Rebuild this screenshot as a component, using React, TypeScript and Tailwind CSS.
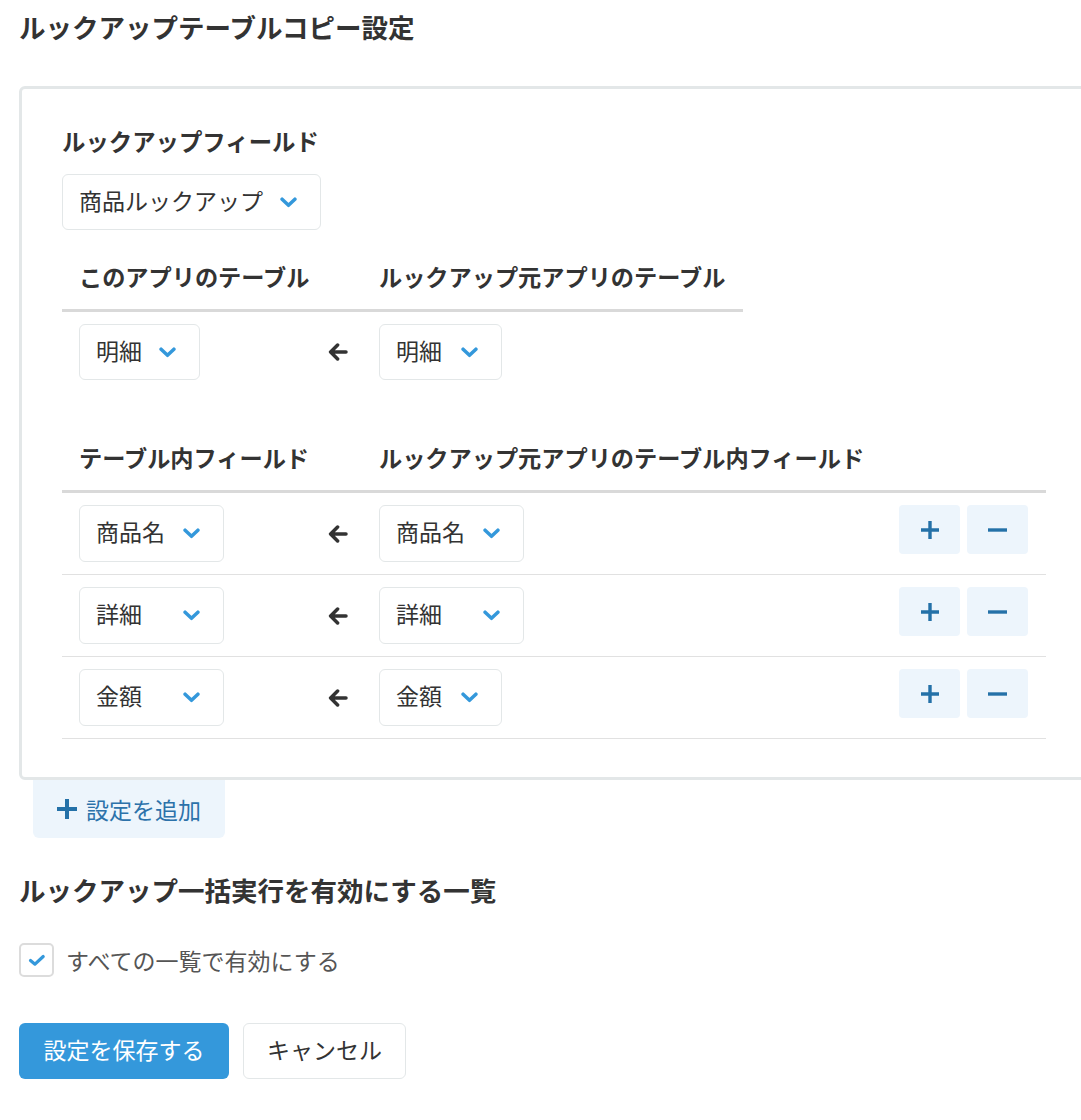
import React from "react";

function Chevron() {
  return (
    <svg width="17" height="11" viewBox="0 0 17 11" fill="none" className="shrink-0">
      <path d="M2.1 2.2 L8.5 8.3 L14.9 2.2" stroke="#3498db" strokeWidth="3.5" strokeLinecap="round" strokeLinejoin="round" />
    </svg>
  );
}

function ArrowLeft() {
  return (
    <svg width="20" height="18" viewBox="0 0 20 18" fill="none">
      <path d="M18 9 H2.8 M9.6 2 L2.6 9 L9.6 16" stroke="#333" strokeWidth="3.5" strokeLinecap="round" strokeLinejoin="round" />
    </svg>
  );
}

function Select({ label, className }: { label: string; className: string }) {
  return (
    <div className={"flex items-center justify-between border border-[#e3e7e8] rounded-[6px] bg-white pl-[16px] pr-[23px] " + className}>
      <span className="text-[23px] leading-[34px] pb-[5px] text-[#333] whitespace-nowrap">{label}</span>
      <Chevron />
    </div>
  );
}

function PlusIcon({ size = 18, stroke = 3.4 }: { size?: number; stroke?: number }) {
  return (
    <svg width={size} height={size} viewBox={`0 0 ${size} ${size}`} fill="none">
      <path d={`M${size / 2} 0 V${size} M0 ${size / 2} H${size}`} stroke="#2471a8" strokeWidth={stroke} />
    </svg>
  );
}

function MinusIcon() {
  return (
    <svg width="19" height="4" viewBox="0 0 19 4" fill="none">
      <path d="M0 2 H19" stroke="#2471a8" strokeWidth="3.4" />
    </svg>
  );
}

const rows = [
  { left: "商品名", right: "商品名", rw: "w-[145px]" },
  { left: "詳細", right: "詳細", rw: "w-[145px]" },
  { left: "金額", right: "金額", rw: "w-[123px]" },
];

export default function App() {
  return (
    <div className="w-[1081px] min-h-[1120px] overflow-hidden bg-white text-[#333] font-['Noto_Sans_CJK_JP','Noto_Sans',sans-serif] pl-[19px]">
      <h1 className="pt-[7px] text-[26.5px] leading-[40px] font-bold whitespace-nowrap">ルックアップテーブルコピー設定</h1>

      <div className="mt-[39px] w-[1100px] border-[3px] border-[#e3e7e8] rounded-[6px] pl-[40px] pt-[35px] pb-[38px]">
        <div className="text-[23.4px] leading-[34px] font-bold whitespace-nowrap">ルックアップフィールド</div>
        <Select label="商品ルックアップ" className="mt-[16px] w-[259px] h-[56px]" />

        {/* table 1 */}
        <div className="mt-[31px] w-[681px]">
          <div className="flex border-b-[3px] border-[#d9d9d9] pb-[18px]">
            <div className="w-[263px] pl-[17px] text-[23.2px] leading-[30px] font-bold whitespace-nowrap">このアプリのテーブル</div>
            <div className="w-[37px]" />
            <div className="flex-1 pl-[17px] text-[23.2px] leading-[30px] font-bold whitespace-nowrap">ルックアップ元アプリのテーブル</div>
          </div>
          <div className="flex items-start py-[12px]">
            <div className="w-[263px] pl-[17px]">
              <Select label="明細" className="w-[121px] h-[56px]" />
            </div>
            <div className="w-[37px] h-[56px] pl-[3px] flex items-center">
              <ArrowLeft />
            </div>
            <div className="flex-1 pl-[17px]">
              <Select label="明細" className="w-[123px] h-[56px]" />
            </div>
          </div>
        </div>

        {/* table 2 */}
        <div className="mt-[50px] w-[984px]">
          <div className="flex border-b-[3px] border-[#d9d9d9] pb-[18px]">
            <div className="w-[263px] pl-[17px] text-[23.2px] leading-[30px] font-bold whitespace-nowrap">テーブル内フィールド</div>
            <div className="w-[37px]" />
            <div className="flex-1 pl-[17px] text-[23.2px] leading-[30px] font-bold whitespace-nowrap">ルックアップ元アプリのテーブル内フィールド</div>
          </div>
          {rows.map((r, i) => (
            <div key={i} className="flex items-start pt-[12px] pb-[12px] border-b border-[#e1e1e1]">
              <div className="w-[263px] pl-[17px]">
                <Select label={r.left} className="w-[145px] h-[57px]" />
              </div>
              <div className="w-[37px] h-[57px] pl-[3px] flex items-center">
                <ArrowLeft />
              </div>
              <div className="flex-1 pl-[17px]">
                <Select label={r.right} className={r.rw + " h-[57px]"} />
              </div>
              <div className="flex gap-[7px] pr-[18px]">
                <button className="w-[61px] h-[49px] rounded-[4px] bg-[#edf5fc] flex items-center justify-center">
                  <PlusIcon />
                </button>
                <button className="w-[61px] h-[49px] rounded-[4px] bg-[#edf5fc] flex items-center justify-center">
                  <MinusIcon />
                </button>
              </div>
            </div>
          ))}
        </div>
      </div>

      <button className="ml-[14px] w-[192px] h-[58px] rounded-b-[6px] bg-[#edf5fc] flex items-center pl-[24px] gap-[9px]">
        <PlusIcon size={20} stroke={4} />
        <span className="text-[23px] leading-[34px] text-[#2c72aa] whitespace-nowrap">設定を追加</span>
      </button>

      <h2 className="mt-[32px] text-[26.5px] leading-[40px] font-bold whitespace-nowrap">ルックアップ一括実行を有効にする一覧</h2>

      <label className="mt-[33px] flex items-center">
        <span className="w-[35px] h-[34px] border-2 border-[#dcdcdc] rounded-[5px] flex items-center justify-center bg-white">
          <svg width="18" height="13" viewBox="0 0 18 13" fill="none">
            <path d="M2.5 6.5 L7 10.2 L15.2 2.5" stroke="#3498db" strokeWidth="3.2" strokeLinecap="round" strokeLinejoin="round" />
          </svg>
        </span>
        <span className="ml-[12px] text-[23px] leading-[34px] text-[#555] whitespace-nowrap">すべての一覧で有効にする</span>
      </label>

      <div className="mt-[46px] flex">
        <button className="w-[210px] h-[56px] rounded-[6px] bg-[#3498db] text-white text-[23px] flex items-center justify-center whitespace-nowrap"><span className="pb-[3px]">設定を保存する</span></button>
        <button className="ml-[14px] w-[163px] h-[56px] rounded-[6px] bg-white border border-[#e3e7e8] text-[#333] text-[23px] flex items-center justify-center whitespace-nowrap"><span className="pb-[3px]">キャンセル</span></button>
      </div>
    </div>
  );
}
